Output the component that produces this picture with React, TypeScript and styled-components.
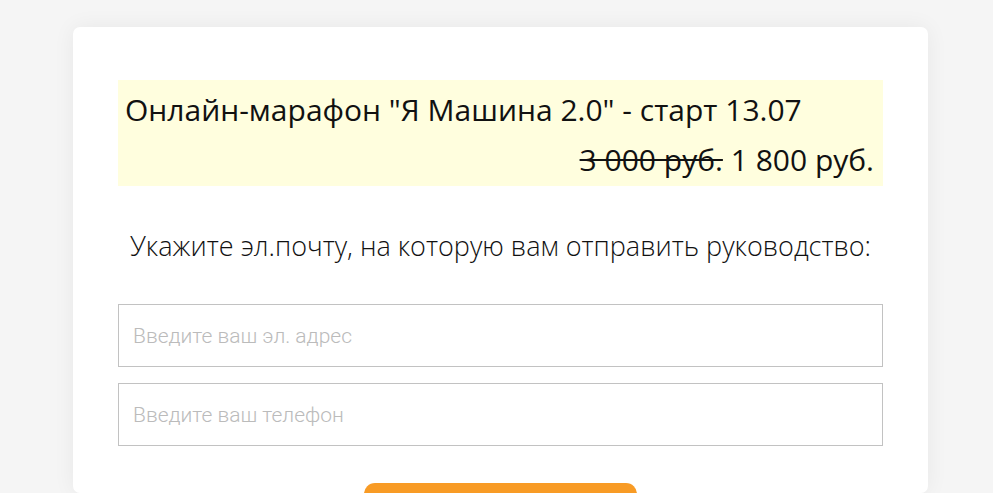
import React from "react";
import styled, { createGlobalStyle } from "styled-components";

const GlobalStyle = createGlobalStyle`
  html, body {
    margin: 0;
    padding: 0;
    background: #f5f5f5;
    font-family: "Open Sans", "Liberation Sans", sans-serif;
  }
  * { box-sizing: border-box; }
`;

const Page = styled.div`
  display: flex;
  justify-content: center;
  padding-top: 27px;
  height: 493px;
  overflow: hidden;
`;

const Card = styled.div`
  width: 855px;
  background: #fff;
  border-radius: 7px;
  box-shadow: 0 0 22px rgba(0, 0, 0, 0.06);
  padding: 53px 45px 40px;
  margin-left: 8px;
`;

const Offer = styled.div`
  background: #fffede;
  padding: 5px 9px 1px 7px;
  color: #111;
  font-size: 30px;
  line-height: 50px;
`;

const OfferTitle = styled.div``;

const OfferPrice = styled.div`
  text-align: right;
`;

const OldPrice = styled.s`
  text-decoration-thickness: 1.5px;
`;

const Lead = styled.p`
  margin: 41px 0 40px;
  text-align: center;
  font-weight: 300;
  font-size: 27px;
  color: #111;
`;

const Form = styled.form`
  display: flex;
  flex-direction: column;
  align-items: center;
  gap: 16px;
`;

const Field = styled.input`
  width: 100%;
  height: 63px;
  border: 1px solid #c2c2c2;
  padding: 0 14px;
  font-family: Roboto, "Liberation Sans", sans-serif;
  font-weight: 300;
  font-size: 21px;
  color: #333;
  outline: none;
  &::placeholder {
    color: #bbb;
  }
`;

const Submit = styled.button`
  margin-top: 21px;
  width: 273px;
  height: 60px;
  border: none;
  border-radius: 11px;
  background: #f89b25;
  color: #fff;
  font-family: "Open Sans", sans-serif;
  font-size: 20px;
`;

export default function App() {
  return (
    <>
      <GlobalStyle />
      <Page>
        <Card>
          <Offer>
            <OfferTitle>Онлайн-марафон "Я Машина 2.0" - старт 13.07</OfferTitle>
            <OfferPrice>
              <OldPrice>3 000 руб.</OldPrice> 1 800 руб.
            </OfferPrice>
          </Offer>
          <Lead>Укажите эл.почту, на которую вам отправить руководство:</Lead>
          <Form onSubmit={(e) => e.preventDefault()}>
            <Field type="email" placeholder="Введите ваш эл. адрес" />
            <Field type="tel" placeholder="Введите ваш телефон" />
            <Submit type="submit">Получить</Submit>
          </Form>
        </Card>
      </Page>
    </>
  );
}
